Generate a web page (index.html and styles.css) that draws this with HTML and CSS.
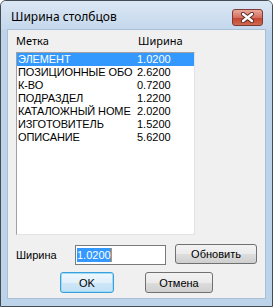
FILE: index.html
```html
<!DOCTYPE html>
<html lang="ru">
<head>
    <meta charset="UTF-8">
    <title>Ширина столбцов</title>
    <link rel="stylesheet" href="styles.css">
</head>
<body>
    <div class="window">
        <div class="titlebar">
            <span class="title">Ширина столбцов</span>
            <button class="close-btn" title="Закрыть">
                <svg width="15" height="11" viewBox="0 0 15 11">
                    <path d="M3 2 L12 9 M12 2 L3 9" stroke="#5a2a26" stroke-width="4.2" stroke-linecap="round"/>
                    <path d="M3 2 L12 9 M12 2 L3 9" stroke="#ffffff" stroke-width="2.4" stroke-linecap="round"/>
                </svg>
            </button>
        </div>

        <div class="client">
            <div class="list-head">
                <span class="col-name">Метка</span>
                <span class="col-width">Ширина</span>
            </div>

            <div class="listbox">
                <div class="row selected"><span class="col-name">ЭЛЕМЕНТ</span><span>1.0200</span></div>
                <div class="row"><span class="col-name">ПОЗИЦИОННЫЕ ОБО</span><span>2.6200</span></div>
                <div class="row"><span class="col-name">К-ВО</span><span>0.7200</span></div>
                <div class="row"><span class="col-name">ПОДРАЗДЕЛ</span><span>1.2200</span></div>
                <div class="row"><span class="col-name">КАТАЛОЖНЫЙ НОМЕ</span><span>2.0200</span></div>
                <div class="row"><span class="col-name">ИЗГОТОВИТЕЛЬ</span><span>1.5200</span></div>
                <div class="row"><span class="col-name">ОПИСАНИЕ</span><span>5.6200</span></div>
            </div>

            <div class="edit-row">
                <label class="edit-label" for="widthInput">Ширина</label>
                <div class="textbox" id="widthInput"><span class="sel">1.0200</span><span class="caret"></span></div>
                <button class="btn update-btn">Обновить</button>
            </div>

            <div class="btn-row">
                <button class="btn ok-btn">OK</button>
                <button class="btn cancel-btn">Отмена</button>
            </div>
        </div>
    </div>
</body>
</html>
```

FILE: styles.css
```css
body {
    margin: 0;
    padding: 0;
    background: #ffffff;
    font-family: 'Liberation Sans', Arial, sans-serif;
    font-size: 11px;
}

.window {
    width: 273px;
    height: 307px;
    box-sizing: border-box;
    border: 1px solid #434b55;
    border-radius: 6px 6px 0 0;
    background: #bcd3ea;
    display: flex;
    flex-direction: column;
    overflow: hidden;
}

.titlebar {
    height: 29px;
    display: flex;
    align-items: flex-start;
    justify-content: space-between;
    background: linear-gradient(#dbe7f4, #c4d7ec);
}

.title {
    font-family: 'Noto Sans', 'DejaVu Sans', sans-serif;
    font-size: 12px;
    color: #000;
    padding: 7px 0 0 10px;
}

.close-btn {
    width: 31px;
    height: 17px;
    margin: 8px 9px 0 0;
    padding: 0;
    border: 1px solid #7d3a34;
    border-radius: 3px;
    background: linear-gradient(#e9a99b, #d4705f 50%, #c4422f 51%, #cf6a4f);
    display: flex;
    align-items: center;
    justify-content: center;
}

.client {
    flex: 1;
    margin: 0 7px 8px 7px;
    background: #f0f0f0;
    padding: 3px 8px 0 8px;
    display: flex;
    flex-direction: column;
    box-shadow: 0 0 0 1px #a9bfd6;
}

.list-head {
    display: flex;
    height: 16px;
    line-height: 16px;
    font-family: 'Noto Sans', 'DejaVu Sans', sans-serif;
    font-size: 11px;
    color: #000;
}

.list-head .col-name {
    width: 122px;
}

.listbox {
    margin-top: 3px;
    width: 179px;
    height: 183px;
    box-sizing: border-box;
    background: #fff;
    border: 1px solid;
    border-color: #a0a0a0 #e3e3e3 #e3e3e3 #a0a0a0;
}

.row {
    display: flex;
    height: 13px;
    line-height: 13px;
    padding-left: 1px;
    color: #000;
    white-space: nowrap;
}

.row .col-name {
    width: 119px;
    letter-spacing: -0.1px;
}

.row.selected {
    background: #3399ff;
    color: #fff;
}

.edit-row {
    display: flex;
    align-items: flex-start;
    margin-top: 9px;
    height: 20px;
}

.edit-label {
    width: 59px;
    padding-top: 5px;
    color: #000;
}

.textbox {
    width: 91px;
    height: 20px;
    margin-top: 1px;
    box-sizing: border-box;
    border: 1px solid #7a7a7a;
    background: #fff;
    padding: 2px 0 0 1px;
    display: flex;
    align-items: flex-start;
}

.sel {
    background: #3399ff;
    color: #fff;
    line-height: 14px;
}

.caret {
    width: 1px;
    height: 14px;
    background: #e08a2a;
}

.btn {
    font-family: 'Liberation Sans', Arial, sans-serif;
    font-size: 11px;
    color: #000;
    height: 20px;
    padding: 0;
    border: 1px solid #707070;
    border-radius: 3px;
    background: linear-gradient(#f2f2f2, #ebebeb 50%, #dddddd 51%, #cfcfcf);
}

.update-btn {
    width: 82px;
    margin-left: 9px;
}

.btn-row {
    display: flex;
    margin-top: 8px;
    padding-left: 44px;
    gap: 31px;
}

.btn-row .btn {
    height: 21px;
}

.ok-btn {
    width: 54px;
    border-color: #3c9fd8;
    background: linear-gradient(#eef7fd, #e1f0fb 50%, #cfe7f8 51%, #c2e0f6);
    box-shadow: inset 0 0 0 1px #9ddcf7;
}

.cancel-btn {
    width: 68px;
}
```
